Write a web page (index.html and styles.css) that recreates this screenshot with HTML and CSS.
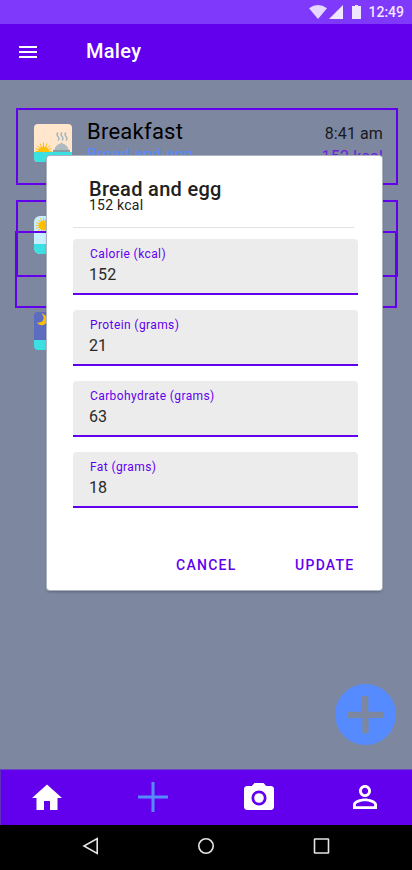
FILE: index.html
```html
<!DOCTYPE html>
<html lang="en">
<head>
<meta charset="utf-8">
<meta name="viewport" content="width=device-width, initial-scale=1">
<title>Maley</title>
<link rel="stylesheet" href="styles.css">
</head>
<body>
<div class="screen">
  <div class="status">
    <svg class="wifi" viewBox="0 0 18 14"><path d="M0 3.2Q9-3.2 18 3.2L9 14z"/></svg>
    <svg class="signal" viewBox="0 0 14 14"><path d="M14 0v14H0z"/></svg>
    <svg class="battery" viewBox="0 0 9 14"><path d="M3 0h3v1h3v13H0V1h3z"/></svg>
    <span class="clock">12:49</span>
  </div>
  <header class="appbar">
    <svg class="menu" viewBox="0 0 18 12"><path d="M0 0h18v2H0zM0 5h18v2H0zM0 10h18v2H0z"/></svg>
    <h1 class="title">Maley</h1>
  </header>
  <main class="content">
    <section class="card">
      <svg class="thumb" viewBox="0 0 38 38">
        <rect width="38" height="38" rx="4" fill="#ffe6cc"/>
        <path d="M0 28h38v6a4 4 0 0 1-4 4H4a4 4 0 0 1-4-4z" fill="#3be0e3"/>
        <path d="M4 28a5.500 5.500 0 0 1 11 0z" fill="#ffbf08"/>
        <path d="M9.500 28V18.500M9.500 28L6 19.500M9.500 28L13 19.500M9.500 28L3 21.500M9.500 28l6.500-6.500M9.500 28L1.500 24.500M9.500 28l8-3.500M1.500 27.500h16" stroke="#ffbf08"/>
        <path d="M20 26.500c1-4 3.500-6.500 6.500-7a1 1 0 1 1 2 0c3 .5 5.500 3 6.500 7z" fill="#aebbc2"/>
        <path d="M19 26h17v2H19z" fill="#899ba5"/>
        <path d="M24 8.500q-2 2 0 4t0 4M28 8.500q-2 2 0 4t0 4M32 8.500q-2 2 0 4t0 4" fill="none" stroke="#9db5c1" stroke-width="1.300"/>
      </svg>
      <div class="meal"><div class="meal-name">Breakfast</div><div class="meal-food">Bread and egg</div></div>
      <div class="meta"><div class="time">8:41 am</div><div class="energy">152 kcal</div></div>
    </section>
    <section class="card">
      <svg class="thumb" viewBox="0 0 38 38">
        <rect width="38" height="38" rx="6" fill="#c7efff"/>
        <path d="M0 28h38v4a6 6 0 0 1-6 6H6a6 6 0 0 1-6-6z" fill="#3be0e3"/>
        <circle cx="9.500" cy="9.500" r="5" fill="#ffbf08"/>
        <path d="M9.500 1.500v16M1.500 9.500h16M4 4l11 11M15 4L4 15M6.500 2l6 15M12.500 2l-6 15M2 6.500l15 6M2 12.500l15-6" stroke="#ffbf08" stroke-width=".8"/>
      </svg>
    </section>
    <section class="card card-empty"></section>
    <svg class="thumb thumb-night" viewBox="0 0 38 38">
      <rect width="38" height="38" rx="4" fill="#5e6cc0"/>
      <path d="M0 28h38v6a4 4 0 0 1-4 4H4a4 4 0 0 1-4-4z" fill="#3be0e3"/>
      <path d="M7.500 1.500c5 1.200 7.500 5.500 5 9.300-2.500 3.500-7.500 3-9.500-.3 2.500.5 5-.2 6.200-2.500 1-2.500.3-4.700-1.700-6.500z" fill="#ffbf08"/>
    </svg>
    <svg class="fab" viewBox="0 0 61 61"><circle cx="30.500" cy="30.500" r="30.500" fill="#568aff"/><path d="M27 12h6.300v15.700H49V34H33.500v15.300H27.300V34H12v-6.300h15z" fill="#7d88a0"/></svg>
  </main>
  <nav class="tabs">
    <svg viewBox="0 0 24 24"><path d="M10 20v-6h4v6h5v-8h3L12 3 2 12h3v8z"/></svg>
    <svg class="add" viewBox="0 0 36 36"><path d="M16.500 2h3v13.500h13.500v3H19.500V32h-3V18.500H3v-3h13.500z"/></svg>
    <svg viewBox="0 0 24 24"><circle cx="12" cy="12" r="3.200"/><path d="M9 2L7.170 4H4c-1.100 0-2 .9-2 2v12c0 1.100.9 2 2 2h16c1.100 0 2-.9 2-2V6c0-1.100-.9-2-2-2h-3.170L15 2H9zm3 15c-2.760 0-5-2.240-5-5s2.240-5 5-5 5 2.240 5 5-2.240 5-5 5z"/></svg>
    <svg class="person" viewBox="0 0 24 24"><path d="M12 5.900c1.160 0 2.100.94 2.100 2.100s-.94 2.100-2.100 2.100S9.900 9.160 9.900 8s.94-2.100 2.100-2.100m0 9c2.970 0 6.100 1.460 6.100 2.100v1.100H5.900V17c0-.64 3.130-2.100 6.100-2.100M12 4C9.790 4 8 5.790 8 8s1.790 4 4 4 4-1.790 4-4-1.790-4-4-4zm0 9c-2.670 0-8 1.340-8 4v3h16v-3c0-2.660-5.330-4-8-4z"/></svg>
  </nav>
  <div class="system">
    <svg viewBox="0 0 18 18"><path d="M15.200 1.500v15L2 9z"/></svg>
    <svg viewBox="0 0 18 18"><circle cx="9" cy="9" r="7.200"/></svg>
    <svg viewBox="0 0 18 18"><rect x="2.500" y="2" width="14" height="14" rx=".5"/></svg>
  </div>
  <div class="dialog" role="dialog">
    <div class="dialog-head">
      <h2 class="dialog-title">Bread and egg</h2>
      <div class="dialog-sub">152 kcal</div>
    </div>
    <div class="fields">
      <div class="field"><div class="label">Calorie (kcal)</div><div class="value">152</div></div>
      <div class="field"><div class="label">Protein (grams)</div><div class="value">21</div></div>
      <div class="field"><div class="label">Carbohydrate (grams)</div><div class="value">63</div></div>
      <div class="field"><div class="label">Fat (grams)</div><div class="value">18</div></div>
    </div>
    <div class="actions"><span class="action">CANCEL</span><span class="action">UPDATE</span></div>
  </div>
</div>
</body>
</html>
```
FILE: styles.css
```css
* { box-sizing: border-box; }
body { margin: 0; font-family: Roboto, sans-serif; }
svg { display: block; flex: none; }
h1, h2 { margin: 0; }
.screen { position: relative; width: 412px; height: 870px; display: flex; flex-direction: column; overflow: hidden; background: #7d88a0; white-space: nowrap; }
.status { height: 24px; background: #7f39fb; display: flex; align-items: center; justify-content: flex-end; padding-right: 8px; fill: #f0e7ff; }
.wifi { width: 18px; height: 14px; margin-right: 2px; fill: #e5d7fe; }
.signal { width: 14px; height: 14px; margin-right: 9px; }
.battery { width: 9px; height: 14px; margin-right: 7px; }
.clock { color: #f0e7ff; font-size: 14px; font-weight: 500; line-height: 24px; }
.appbar { height: 56px; background: #6200ee; display: flex; align-items: center; padding-left: 19px; }
.menu { width: 18px; height: 12px; fill: #fff; }
.title { margin-left: 49px; margin-top: -2px; color: #fff; font-size: 20px; font-weight: 500; line-height: 28px; letter-spacing: .3px; }
.content { flex: 1; padding: 28px 14px 0 16px; display: flex; flex-direction: column; }
.card { height: 77px; flex: none; border: 2px solid #6200ee; margin-bottom: 15px; padding: 14px 13px 0 16px; display: flex; align-items: flex-start; }
.card-empty { margin: -61px 1px 4px -1px; }
.thumb { width: 38px; height: 38px; }
.thumb-night { margin-left: 18px; }
.meal { margin: -5px auto 0 15px; }
.meal-name { font-size: 22px; line-height: 26px; letter-spacing: .25px; color: #000; }
.meal-food { font-size: 16px; line-height: 19px; letter-spacing: .3px; color: #568aff; }
.meta { text-align: right; font-size: 16px; line-height: 23px; margin-top: -2px; }
.time { color: #17191e; letter-spacing: .1px; }
.energy { color: #6d20df; letter-spacing: .2px; }
.fab { width: 61px; height: 61px; margin: auto 2px 24px auto; }
.tabs { height: 56px; flex: none; background: #6200ee; border-left: 1px solid #5b31b8; border-top: 1px solid #6c45c5; display: flex; align-items: flex-start; justify-content: space-between; padding: 10px 29px 0 28px; fill: #fff; }
.tabs svg { width: 36px; height: 36px; }
.tabs .add { fill: #568aff; }
.tabs .person { margin-top: -1px; }
.system { height: 45px; flex: none; background: #000; display: flex; justify-content: space-between; padding: 12px 82px 0; fill: none; stroke: #e5e5e5; stroke-width: 1.600; }
.system svg { width: 18px; height: 18px; }
.dialog { position: absolute; left: 47px; top: 156px; width: 335px; height: 434px; background: #fff; border-radius: 3px; box-shadow: 0 0 0 1px #aeb3c0, 0 2px 3px #0004; padding: 0 24px 0 26px; }
.dialog-head { height: 72px; margin-right: 4px; padding: 23px 0 0 16px; border-bottom: 1px solid #e2e2e2; color: #212121; }
.dialog-title { font-size: 20px; font-weight: 500; line-height: 20px; letter-spacing: .3px; }
.dialog-sub { font-size: 14px; line-height: 12px; letter-spacing: .25px; }
.fields { margin-top: 11px; display: grid; gap: 15px; }
.field { height: 56px; background: #ececec; border-bottom: 2px solid #6200ee; border-radius: 4px 4px 0 0; padding: 7px 16px 0; }
.label { color: #6200ee; font-size: 12px; line-height: 16px; letter-spacing: .4px; margin-left: 1px; }
.value { color: #292929; font-size: 16px; line-height: 20px; margin-top: 3px; letter-spacing: .1px; }
.actions { display: flex; justify-content: flex-end; gap: 58.500px; margin-top: 47px; padding-right: 3.500px; }
.action { color: #6200ee; font-size: 14px; font-weight: 500; line-height: 20px; letter-spacing: 1.250px; }
```
